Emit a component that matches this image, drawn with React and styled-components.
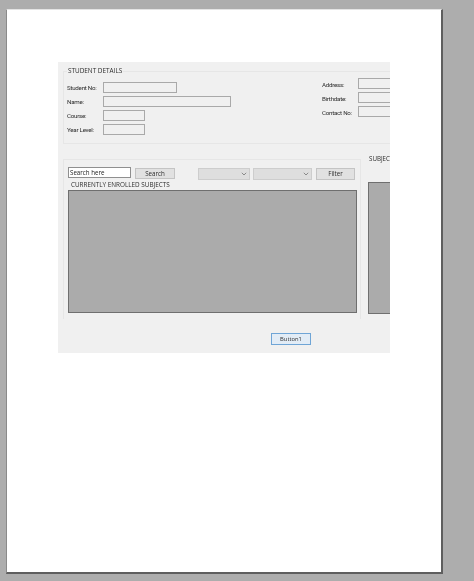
import React from "react";
import styled, { createGlobalStyle } from "styled-components";

const GlobalStyle = createGlobalStyle`
	html, body {
		margin: 0;
		padding: 0;
		background: #adadad;
	}
	* {
		box-sizing: border-box;
	}
`;

const Workspace = styled.div`
	width: 474px;
	height: 581px;
	padding: 9px 31px 7px 6px;
	background: #adadad;
	overflow: hidden;
`;

const Sheet = styled.div`
	width: 437px;
	height: 565px;
	padding: 52px 0 0 51px;
	background: #fff;
	border-top: 1px solid #e4e4e4;
	border-left: 1px solid #8a8a8a;
	border-right: 2px solid #5e5e5e;
	border-bottom: 2px solid #5e5e5e;
`;

const Form = styled.div`
	width: 332px;
	height: 291px;
	padding: 9px 0 0 5px;
	background: #f0f0f0;
	overflow: hidden;
	font-family: "Open Sans", "Liberation Sans", sans-serif;
	font-size: 6.2px;
	color: #2c2c2c;
	filter: blur(0.45px);
`;

const DetailsGroup = styled.div`
	position: relative;
	display: flex;
	width: 340px;
	height: 73px;
	padding: 6px 0 0 3px;
	border: 1px solid #e6e6e6;
`;

const Legend = styled.span`
	position: absolute;
	top: -5px;
	left: 3px;
	padding: 0 1px;
	background: #f0f0f0;
	line-height: 8px;
	font-size: 6.4px;
`;

const FieldColumn = styled.div`
	display: flex;
	flex: none;
	flex-direction: column;
	gap: 3px;
	width: ${props => props.width}px;
	margin-top: ${props => props.top || 0}px;
`;

const FieldRow = styled.div`
	display: flex;
	align-items: center;
	height: 11px;
`;

const FieldLabel = styled.span`
	flex: none;
	width: 36px;
	padding-top: ${props => props.drop || 0}px;
	font-family: Roboto, "Liberation Sans", sans-serif;
	font-size: 6.2px;
	letter-spacing: -0.25px;
	white-space: nowrap;
`;

const TextBox = styled.div`
	flex: none;
	width: ${props => props.width}px;
	height: 11px;
	background: #f0f0f0;
	border: 1px solid #a9a9a9;
`;

const LowerRow = styled.div`
	display: flex;
	gap: 7px;
	width: 340px;
	margin-top: 15px;
`;

const EnrolledGroup = styled.div`
	flex: none;
	width: 298px;
	height: 160px;
	padding: 7px 0 0 4px;
	border-top: 1px solid #e6e6e6;
	border-left: 1px solid #e6e6e6;
	border-right: 1px solid #e6e6e6;
`;

const Toolbar = styled.div`
	display: flex;
	align-items: flex-start;
	height: 13px;
`;

const SearchBox = styled.div`
	flex: none;
	width: 63px;
	height: 11px;
	padding-left: 1px;
	background: #fff;
	border: 1px solid #8f8f8f;
	line-height: 9px;
	color: #222;
`;

const ActionButton = styled.div`
	flex: none;
	width: ${props => props.width}px;
	height: ${props => props.height}px;
	margin-top: 1px;
	margin-left: ${props => props.gap}px;
	background: #e1e1e1;
	border: 1px solid #c4c4c4;
	text-align: center;
	line-height: ${props => props.height - 2}px;
`;

const Select = styled.div`
	display: flex;
	flex: none;
	align-items: center;
	justify-content: flex-end;
	width: ${props => props.width}px;
	height: 12px;
	margin-top: 1px;
	margin-left: ${props => props.gap}px;
	padding-right: 2px;
	background: #dedede;
	border: 1px solid #cdcdcd;
`;

const Caption = styled.div`
	height: 10px;
	padding-left: 3px;
	line-height: 10px;
	font-size: 6.35px;
	white-space: nowrap;
`;

const GreyGrid = styled.div`
	width: ${props => props.width}px;
	height: ${props => props.height}px;
	background: #ababab;
	border: 1px solid #6f6f6f;
`;

const SubjectsGroup = styled.div`
	flex: none;
	width: 36px;
`;

const SubjectsTitle = styled.div`
	height: 23px;
	padding-left: 1px;
	white-space: nowrap;
	line-height: 0;
`;

const ButtonRow = styled.div`
	display: flex;
	margin-top: 14px;
	padding-left: 208px;
`;

const DefaultButton = styled.div`
	width: 40px;
	height: 12px;
	background: #e2ecf6;
	border: 1px solid #6fa5d6;
	text-align: center;
	line-height: 10px;
	font-size: 5.8px;
`;

const Chevron = () => (
	<svg width="6" height="4" viewBox="0 0 6 4">
		<path d="M.8.8 3 3 5.2.8" fill="none" stroke="#666" strokeWidth=".7" />
	</svg>
);

const Field = ({ label, boxWidth, drop }) => (
	<FieldRow>
		<FieldLabel drop={drop}>{label}</FieldLabel>
		<TextBox width={boxWidth} />
	</FieldRow>
);

const App = () => (
	<Workspace>
		<GlobalStyle />
		<Sheet>
			<Form>
				<DetailsGroup>
					<Legend>STUDENT DETAILS</Legend>
					<FieldColumn width={255} top={4}>
						<Field label="Student No:" boxWidth={74} />
						<Field label="Name:" boxWidth={128} />
						<Field label="Course:" boxWidth={42} />
						<Field label="Year Level:" boxWidth={42} />
					</FieldColumn>
					<FieldColumn width={80}>
						<Field label="Address:" boxWidth={40} drop={3} />
						<Field label="Birthdate:" boxWidth={40} drop={3} />
						<Field label="Contact No:" boxWidth={40} drop={3} />
					</FieldColumn>
				</DetailsGroup>
				<LowerRow>
					<EnrolledGroup>
						<Toolbar>
							<SearchBox>Search here</SearchBox>
							<ActionButton width={40} height={11} gap={4}>Search</ActionButton>
							<Select width={52} gap={23}><Chevron /></Select>
							<Select width={59} gap={3}><Chevron /></Select>
							<ActionButton width={39} height={12} gap={4}>Filter</ActionButton>
						</Toolbar>
						<Caption>CURRENTLY ENROLLED SUBJECTS</Caption>
						<GreyGrid width={289} height={123} />
					</EnrolledGroup>
					<SubjectsGroup>
						<SubjectsTitle>SUBJECTS</SubjectsTitle>
						<GreyGrid width={40} height={132} />
					</SubjectsGroup>
				</LowerRow>
				<ButtonRow>
					<DefaultButton>Button1</DefaultButton>
				</ButtonRow>
			</Form>
		</Sheet>
	</Workspace>
);

export default App;
